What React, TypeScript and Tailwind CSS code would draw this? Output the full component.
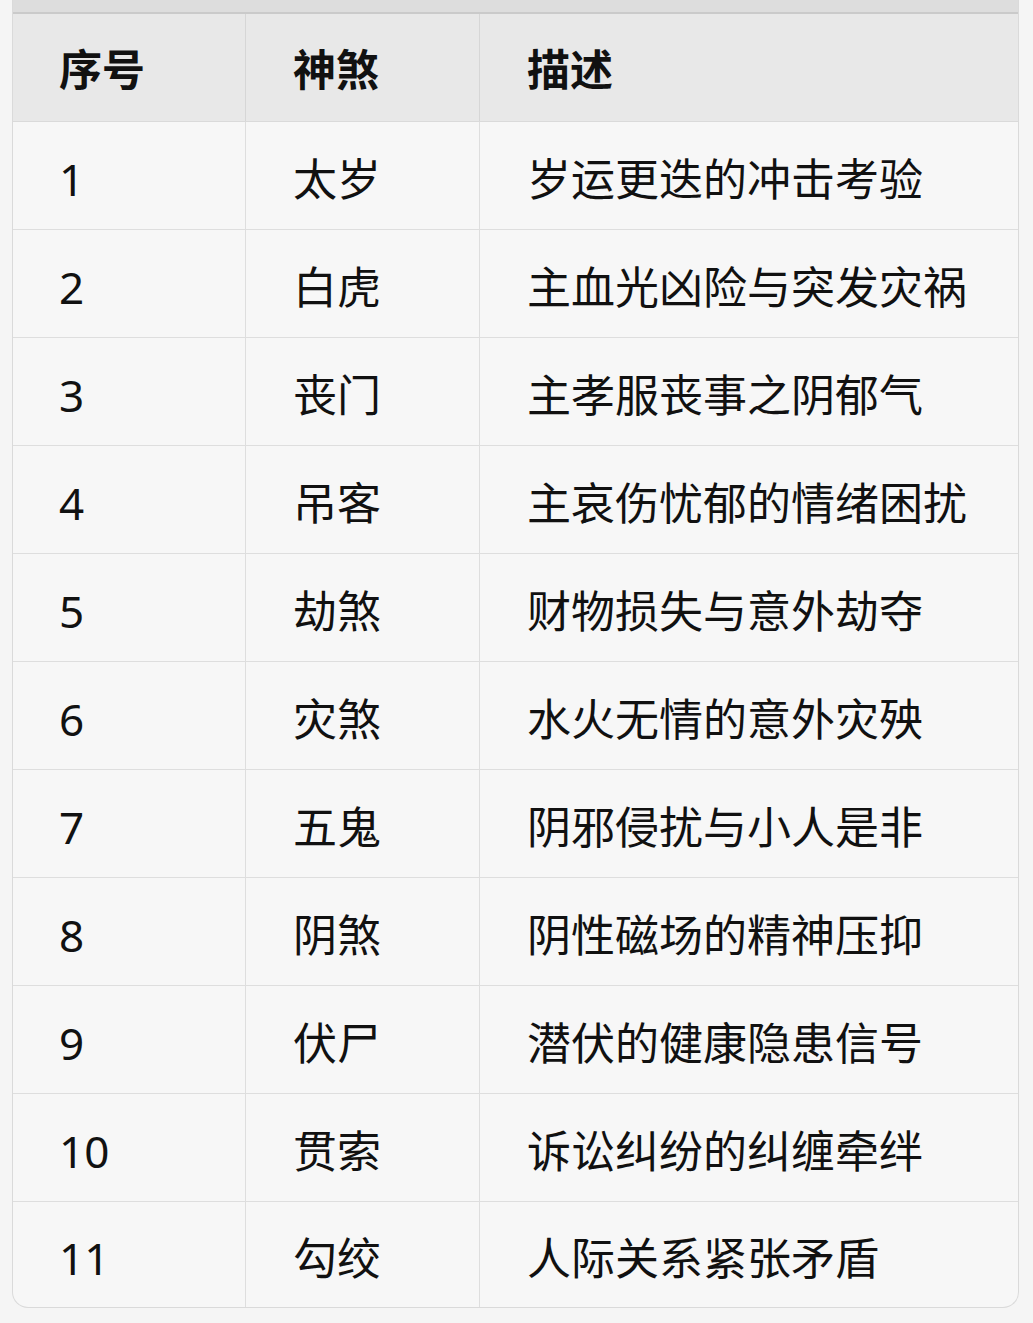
import React from "react";

const rows: [string, string, string][] = [
  ["1", "太岁", "岁运更迭的冲击考验"],
  ["2", "白虎", "主血光凶险与突发灾祸"],
  ["3", "丧门", "主孝服丧事之阴郁气"],
  ["4", "吊客", "主哀伤忧郁的情绪困扰"],
  ["5", "劫煞", "财物损失与意外劫夺"],
  ["6", "灾煞", "水火无情的意外灾殃"],
  ["7", "五鬼", "阴邪侵扰与小人是非"],
  ["8", "阴煞", "阴性磁场的精神压抑"],
  ["9", "伏尸", "潜伏的健康隐患信号"],
  ["10", "贯索", "诉讼纠纷的纠缠牵绊"],
  ["11", "勾绞", "人际关系紧张矛盾"],
];

export default function App() {
  return (
    <div
      className="min-h-[1323px] bg-[#f5f5f5] px-[12px] pr-[14px] text-[#111111]"
      style={{ fontFamily: '"Noto Sans", "Noto Sans CJK SC", sans-serif' }}
    >
      <div className="overflow-hidden rounded-b-[16px] border-x border-b border-[#dadada] bg-[#f7f7f7]">
        {/* 上方被截掉的部分 */}
        <div className="h-[14px] border-b-2 border-[#cacaca] bg-[#dddddd]" />

        {/* 表头 */}
        <div className="grid h-[108px] grid-cols-[233px_234px_1fr] border-b border-[#dadada] bg-[#e8e8e8] text-[43px] font-bold">
          <div className="flex items-center border-r border-[#d6d6d6] pl-[46px] pt-[6px]">序号</div>
          <div className="flex items-center border-r border-[#d6d6d6] pl-[47px] pt-[6px]">神煞</div>
          <div className="flex items-center pl-[47px] pt-[6px]">描述</div>
        </div>

        {/* 表体 */}
        {rows.map(([no, name, desc], i) => (
          <div
            key={no}
            className={`grid grid-cols-[233px_234px_1fr] text-[44px] ${
              i === rows.length - 1 ? "h-[105px]" : "h-[108px] border-b border-[#dedede]"
            }`}
          >
            <div className="flex items-center border-r border-[#dedede] pl-[46px] pt-[6px]">{no}</div>
            <div className="flex items-center border-r border-[#dedede] pl-[47px] pt-[6px]">{name}</div>
            <div className="flex items-center pl-[47px] pt-[6px]">{desc}</div>
          </div>
        ))}
      </div>
    </div>
  );
}
